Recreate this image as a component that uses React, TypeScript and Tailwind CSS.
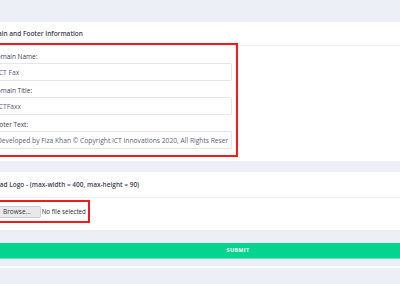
export default function App() {
  return (
    <div className="h-[284px] overflow-hidden bg-[#eceff6] font-['Open_Sans',sans-serif] text-[6.5px]">
      <div className="ml-[-17px] w-[510px]">
        <div className="h-[22px]" />

        {/* DOMAIN AND FOOTER CARD */}
        <div className="bg-white pb-[4px]">
          <div className="h-[24px] pt-[1px] border-b border-[#eef0f5] flex items-center font-semibold text-[#3f4254]">
            Domain and Footer Information
          </div>
          <div className="relative -mt-[3px] ml-[4px] w-[251px] border-2 border-[#f21b1b] pt-[7px] pb-[6px] pl-[3px] pr-[4px]">
            {[
              { label: 'Domain Name:', value: 'ICT Fax' },
              { label: 'Domain Title:', value: 'ICTFaxx' },
              { label: 'Footer Text:', value: 'Developed by Fiza Khan © Copyright ICT Innovations 2020, All Rights Reserved' },
            ].map((f, i) => (
              <div key={f.label} className={i < 2 ? 'mb-[5px]' : ''}>
                <label className="block h-[9px] leading-[9px] mb-[2px] text-[#3f4254]">{f.label}</label>
                <input
                  type="text"
                  readOnly
                  defaultValue={f.value}
                  className="block w-full h-[18px] border border-[#e4e6ef] rounded-[2px] pl-[4px] pr-[3px] text-[6.7px] text-[#5e6278] outline-none"
                />
              </div>
            ))}
          </div>
        </div>

        <div className="h-[11px]" />

        {/* UPLOAD LOGO CARD */}
        <div className="bg-white pb-[7px]">
          <div className="h-[26px] border-b border-[#eef0f5] pl-[2px] flex items-center font-semibold text-[#3f4254] whitespace-nowrap">
            Upload Logo - (max-width = 400, max-height = 90)
          </div>
          <div className="mt-[2px] ml-[2px] w-[105px] h-[23px] border-2 border-[#f21b1b] flex items-center pl-[6px] gap-[1px] whitespace-nowrap">
            <div className="h-[12px] px-[9px] flex items-center bg-[#e9e9ed] border border-[#cfcfd6] rounded-[2px] text-[#3a3a3a]">
              Browse...
            </div>
            <span className="text-[6.2px] text-[#2a2a2a]">No file selected</span>
          </div>
        </div>

        <div className="h-[13px]" />

        {/* SUBMIT */}
        <button className="w-full h-[16px] bg-[#05d48f] border-b border-[#5fe6b6] text-white font-bold text-[5.5px] tracking-[0.3px] flex items-center justify-center">
          SUBMIT
        </button>

        <div className="h-[7px]" />
        <div className="h-[2px] bg-white" />
      </div>
    </div>
  )
}
